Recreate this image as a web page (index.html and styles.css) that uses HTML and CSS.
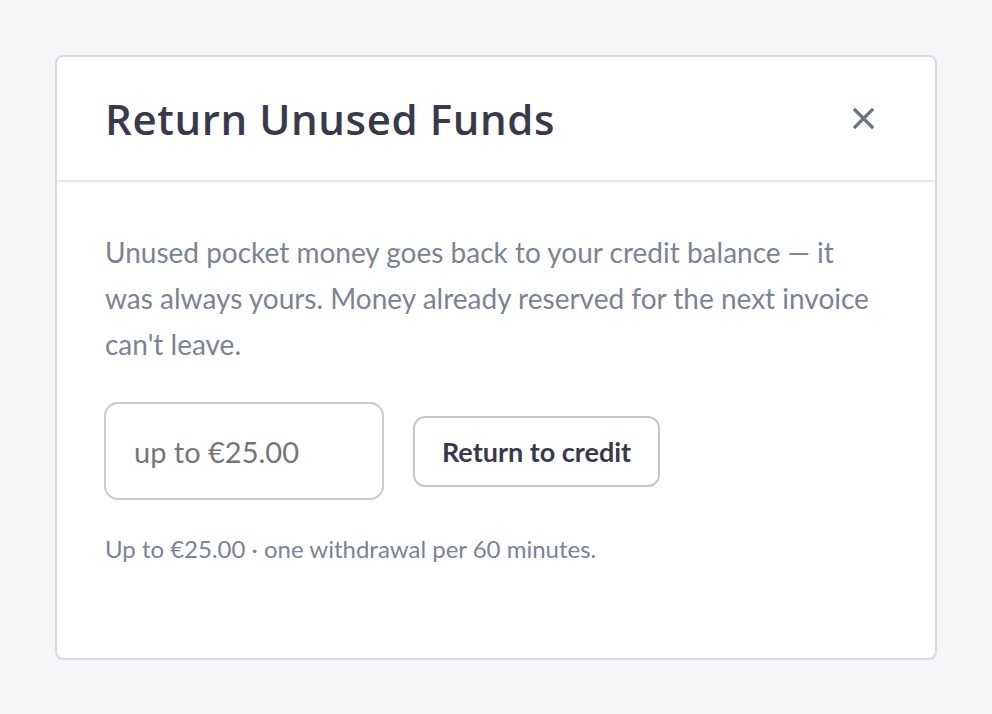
FILE: index.html
```html
<!DOCTYPE html>
<html>
<head>
  <title>Return Unused Funds</title>
  <link rel="stylesheet" href="styles.css">
</head>
<body>

  <div class="modal">
    <header class="modal-header">
      <h1>Return Unused Funds</h1>
      <button class="close-btn" aria-label="Close">
        <svg width="21" height="21" viewBox="0 0 21 21">
          <path d="M2 2 L19 19 M19 2 L2 19" stroke="#6b7280" stroke-width="3.2" stroke-linecap="square" fill="none"/>
        </svg>
      </button>
    </header>

    <div class="modal-body">
      <p class="intro">Unused pocket money goes back to your credit balance — it was always yours. Money already reserved for the next invoice can't leave.</p>

      <form class="return-form">
        <input type="text" class="amount-input" placeholder="up to €25.00">
        <button type="submit" class="return-btn">Return to credit</button>
      </form>

      <p class="hint">Up to €25.00 · one withdrawal per 60 minutes.</p>
    </div>
  </div>

</body>
</html>
```

FILE: styles.css
```css
body {
  font-family: "Lato", sans-serif;
  margin: 0;
  padding: 55px;
  background-color: #f5f6f8;
  color: #333;
}

.modal {
  width: 878px;
  background-color: #fff;
  border: 2px solid #d5dae1;
  border-radius: 8px;
}

.modal-header {
  height: 123px;
  padding: 0 52px 0 48px;
  border-bottom: 2px solid #e3e5e9;
  display: flex;
  justify-content: space-between;
  align-items: center;
}

.modal-header h1 {
  margin: 0;
  font-family: "Open Sans", sans-serif;
  font-weight: 600;
  font-size: 42px;
  color: #383a4b;
  letter-spacing: 0.6px;
}

.close-btn {
  width: 40px;
  height: 40px;
  padding: 0;
  border: none;
  background: none;
  display: flex;
  align-items: center;
  justify-content: center;
  cursor: pointer;
}

.modal-body {
  padding: 47px 48px 91px 48px;
}

.intro {
  margin: 0;
  font-size: 28px;
  line-height: 46px;
  color: #7b8494;
}

.return-form {
  margin-top: 35px;
  display: flex;
  align-items: center;
  gap: 29px;
}

.amount-input {
  width: 280px;
  height: 98px;
  box-sizing: border-box;
  padding: 0 28px;
  border: 2px solid #c9cacd;
  border-radius: 14px;
  font-family: "Lato", sans-serif;
  font-size: 29px;
  color: #333;
  margin-left: -1px;
}

.amount-input::placeholder {
  color: #767676;
}

.return-btn {
  width: 247px;
  height: 71px;
  padding: 0;
  background-color: #fff;
  border: 2px solid #c6c7ca;
  border-radius: 12px;
  font-family: "Lato", sans-serif;
  font-weight: bold;
  font-size: 27px;
  color: #383a4b;
  cursor: pointer;
}

.hint {
  margin: 31px 0 0;
  font-size: 24px;
  line-height: 36px;
  color: #7b8494;
}
```
